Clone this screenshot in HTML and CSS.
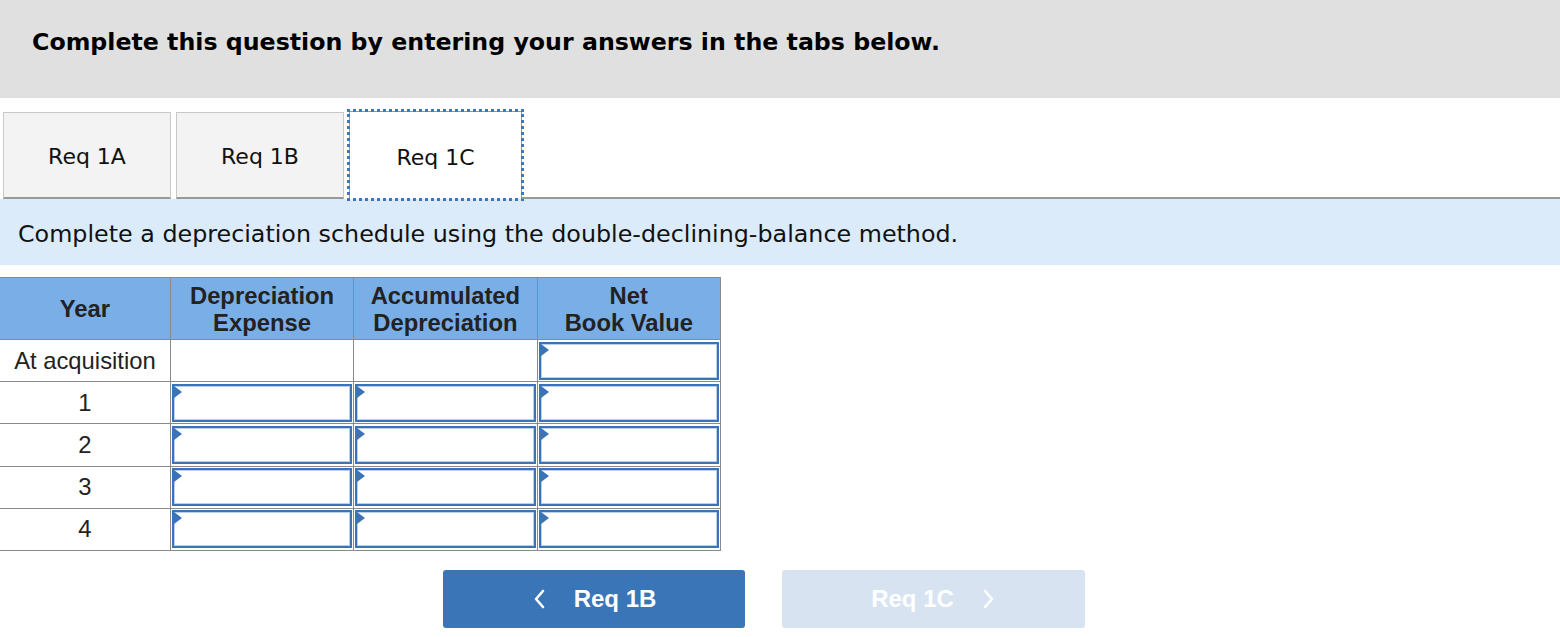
FILE: index.html
```html
<!DOCTYPE html>
<html>
<head>
<meta charset="utf-8">
<link rel="stylesheet" href="styles.css">
</head>
<body>
<div class="header">
  <h1 class="header-title">Complete this question by entering your answers in the tabs below.</h1>
</div>
<div class="tabs">
  <div class="tab">Req 1A</div>
  <div class="tab">Req 1B</div>
  <div class="tab tab-active">Req 1C</div>
  <div class="tab-rest"></div>
</div>
<div class="instruction">Complete a depreciation schedule using the double-declining-balance method.</div>
<table class="schedule">
  <colgroup>
    <col class="c-year"><col class="c-val"><col class="c-val"><col class="c-val">
  </colgroup>
  <thead>
    <tr>
      <th>Year</th>
      <th>Depreciation<br>Expense</th>
      <th>Accumulated<br>Depreciation</th>
      <th>Net<br>Book Value</th>
    </tr>
  </thead>
  <tbody>
    <tr>
      <td class="year">At acquisition</td>
      <td></td>
      <td></td>
      <td class="in"><div class="box"></div></td>
    </tr>
    <tr>
      <td class="year">1</td>
      <td class="in"><div class="box"></div></td>
      <td class="in"><div class="box"></div></td>
      <td class="in"><div class="box"></div></td>
    </tr>
    <tr>
      <td class="year">2</td>
      <td class="in"><div class="box"></div></td>
      <td class="in"><div class="box"></div></td>
      <td class="in"><div class="box"></div></td>
    </tr>
    <tr>
      <td class="year">3</td>
      <td class="in"><div class="box"></div></td>
      <td class="in"><div class="box"></div></td>
      <td class="in"><div class="box"></div></td>
    </tr>
    <tr>
      <td class="year">4</td>
      <td class="in"><div class="box"></div></td>
      <td class="in"><div class="box"></div></td>
      <td class="in"><div class="box"></div></td>
    </tr>
  </tbody>
</table>
<div class="nav">
  <button class="btn btn-prev">
    <svg class="chev" width="14" height="22" viewBox="0 0 14 22"><path d="M11 3 L4 11 L11 19" fill="none" stroke="#fff" stroke-width="2.6" stroke-linecap="round" stroke-linejoin="round"/></svg>
    <span>Req 1B</span>
  </button>
  <button class="btn btn-next">
    <span>Req 1C</span>
    <svg class="chev" width="14" height="22" viewBox="0 0 14 22"><path d="M3 3 L10 11 L3 19" fill="none" stroke="#fff" stroke-width="2.6" stroke-linecap="round" stroke-linejoin="round"/></svg>
  </button>
</div>
</body>
</html>
```
FILE: styles.css
```css
html, body {
  margin: 0;
  padding: 0;
  background: #fff;
}
body {
  width: 1560px;
  font-family: "DejaVu Sans", Verdana, sans-serif;
  color: #111;
}
.header {
  background: #e0e0e0;
  height: 98px;
  padding: 0 0 0 32px;
  box-sizing: border-box;
  display: flex;
  align-items: flex-start;
}
.header-title {
  margin: 28px 0 0 0;
  font-size: 23.7px;
  font-weight: bold;
  color: #000;
}
.tabs {
  display: flex;
  align-items: flex-end;
  margin-top: 14px;
  padding-left: 3px;
  height: 87px;
}
.tab {
  width: 168px;
  height: 87px;
  box-sizing: border-box;
  background: #f3f3f3;
  border: 1px solid #c9c9c9;
  border-bottom: 2px solid #999;
  display: flex;
  align-items: center;
  justify-content: center;
  padding-top: 3px;
  font-size: 22px;
  color: #111;
  margin-right: 5px;
}
.tab-active {
  background: #fff;
  width: 173px;
  border: 1px solid #999;
  border-bottom: none;
  outline: 3px dotted #3b78c4;
  outline-offset: -1px;
  margin-right: 0;
  height: 88px;
}
.tab-rest {
  flex: 1;
  height: 87px;
  border-bottom: 2px solid #999;
  box-sizing: border-box;
}
.instruction {
  background: #dbebf9;
  height: 66px;
  box-sizing: border-box;
  padding: 21px 0 0 18px;
  font-size: 23.8px;
  color: #111;
}
.schedule {
  margin-top: 12px;
  border-collapse: collapse;
  width: 721px;
  table-layout: fixed;
  font-family: "Liberation Sans", Arial, sans-serif;
  font-size: 23.8px;
  color: #222;
}
.c-year { width: 170px; }
.c-val { width: 183px; }
.schedule th {
  background: #7aaee6;
  border: 1px solid #8a8a8a;
  height: 62px;
  box-sizing: border-box;
  font-weight: bold;
  line-height: 27px;
  padding: 0;
  color: #222;
}
.schedule th:first-child {
  border-left: none;
}
.schedule td {
  border: 1px solid #8a8a8a;
  height: 42.2px;
  box-sizing: border-box;
  padding: 0;
  text-align: center;
}
.schedule td.year {
  border-left: none;
}
.schedule td.in {
  padding: 1px;
}
.box {
  height: 38px;
  box-sizing: border-box;
  border: 2px solid #3b73b9;
  box-shadow: inset 0 0 0 1px #b7d0ee;
  background: #fff;
  position: relative;
}
.box::before {
  content: "";
  position: absolute;
  left: 0;
  top: 0;
  width: 0;
  height: 0;
  border-top: 6px solid transparent;
  border-bottom: 6px solid transparent;
  border-left: 8px solid #3b73b9;
}
.nav {
  display: flex;
  gap: 37px;
  margin: 19px 0 0 443px;
}
.btn {
  width: 302px;
  height: 58px;
  border: none;
  border-radius: 3px;
  display: flex;
  align-items: center;
  justify-content: center;
  gap: 28px;
  font-family: "Liberation Sans", Arial, sans-serif;
  font-weight: bold;
  font-size: 24px;
  color: #fff;
  padding: 0;
}
.btn-prev {
  background: #3a75b8;
}
.btn-next {
  width: 303px;
  background: #d7e3f1;
}
.chev {
  display: block;
}
```
